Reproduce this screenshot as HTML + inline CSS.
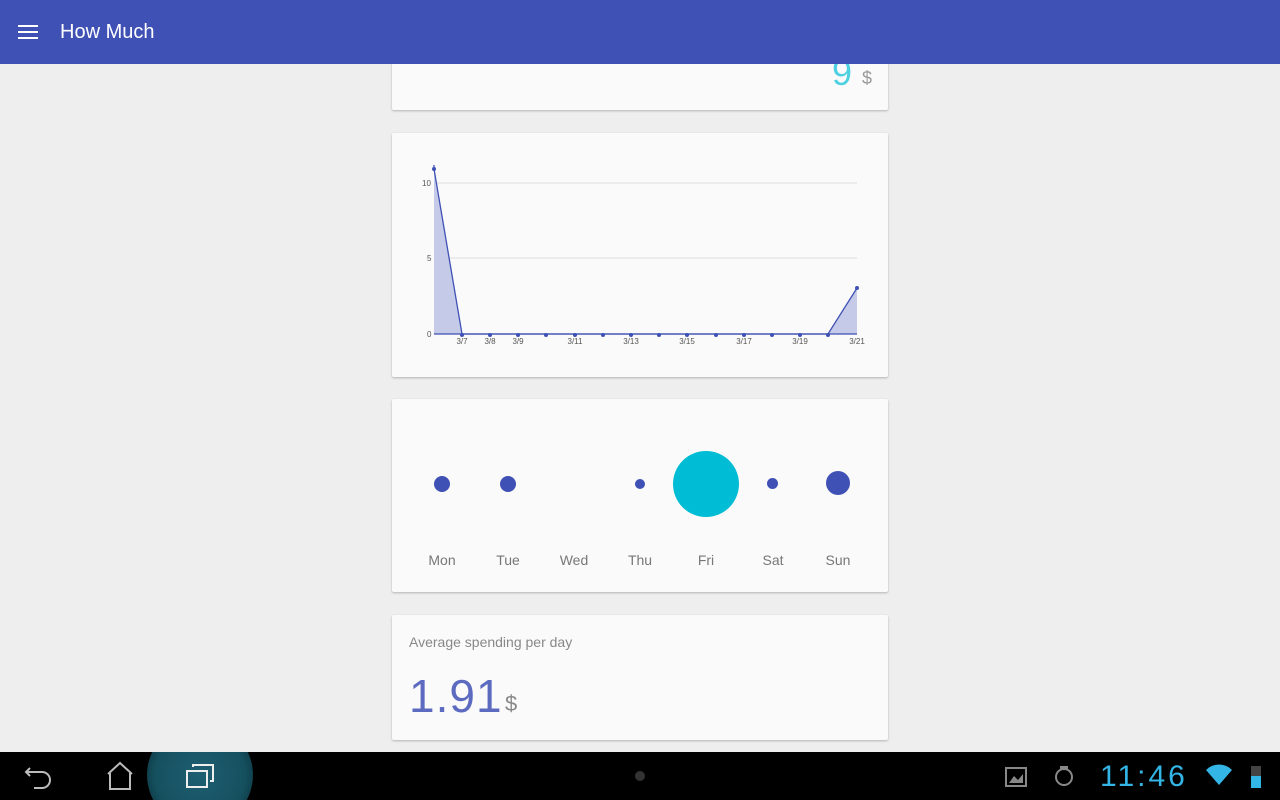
<!DOCTYPE html>
<html><head><style>
body{margin:0;width:1280px;height:800px;overflow:hidden;background:#eeeeee;font-family:"Liberation Sans",sans-serif;position:relative}
.bar{position:absolute;left:0;top:0;width:1280px;height:64px;background:#3f51b5;color:#fff;z-index:5}
.card{position:absolute;left:392px;width:496px;background:#fafafa;box-shadow:0 1px 2px rgba(0,0,0,.25);border-radius:2px}
.nav{position:absolute;left:0;top:752px;width:1280px;height:48px;background:#000;overflow:hidden}
.day{position:absolute;top:552px;font-size:14px;color:#777;width:60px;text-align:center}
.dot{position:absolute;border-radius:50%;background:#3f51b5}
</style></head><body>
<div class="bar">
<div style="position:absolute;left:18px;top:25px;width:20px;height:2px;background:#fff;box-shadow:0 6px 0 #fff,0 12px 0 #fff"></div>
<div style="position:absolute;left:60px;top:21px;font-size:20px;">How Much</div>
</div>
<div class="card" style="top:40px;height:70px">
<div style="position:absolute;right:36px;top:12px;font-size:36px;color:#4dd0e1">9</div>
<div style="position:absolute;right:16px;top:28px;font-size:18px;color:#999">$</div>
</div>
<div class="card" style="top:133px;height:244px"></div>
<svg style="position:absolute;left:0;top:0" width="1280" height="400">
<line x1="434" y1="183" x2="857" y2="183" stroke="#ddd"/>
<line x1="434" y1="258" x2="857" y2="258" stroke="#ddd"/>
<polygon points="434,334 434,169 462,334 828,334 857,288 857,334" fill="#c5cae9"/>
<polyline points="434,165 434,169 462,334 828,334 857,288" fill="none" stroke="#3f51b5" stroke-width="1.3"/>
<line x1="434" y1="334" x2="857" y2="334" stroke="#3f51b5" stroke-width="1.3"/>
<g fill="#3f51b5">
<circle cx="434" cy="169" r="2"/><circle cx="462" cy="335" r="2"/><circle cx="490" cy="335" r="2"/><circle cx="518" cy="335" r="2"/><circle cx="546" cy="335" r="2"/><circle cx="575" cy="335" r="2"/><circle cx="603" cy="335" r="2"/><circle cx="631" cy="335" r="2"/><circle cx="659" cy="335" r="2"/><circle cx="687" cy="335" r="2"/><circle cx="716" cy="335" r="2"/><circle cx="744" cy="335" r="2"/><circle cx="772" cy="335" r="2"/><circle cx="800" cy="335" r="2"/><circle cx="828" cy="335" r="2"/><circle cx="857" cy="288" r="2"/>
</g>
<g font-size="8" fill="#555" font-family="Liberation Sans">
<text x="422" y="186">10</text><text x="427" y="261">5</text><text x="427" y="337">0</text>
<g text-anchor="middle"><text x="462" y="344">3/7</text><text x="490" y="344">3/8</text><text x="518" y="344">3/9</text><text x="575" y="344">3/11</text><text x="631" y="344">3/13</text><text x="687" y="344">3/15</text><text x="744" y="344">3/17</text><text x="800" y="344">3/19</text><text x="857" y="344">3/21</text></g>
</g>
</svg>
<div class="card" style="top:399px;height:193px"></div>
<div class="dot" style="left:434px;top:476px;width:16px;height:16px"></div>
<div class="dot" style="left:500px;top:476px;width:16px;height:16px"></div>
<div class="dot" style="left:635px;top:479px;width:10px;height:10px"></div>
<div class="dot" style="left:673px;top:451px;width:66px;height:66px;background:#00bcd4"></div>
<div class="dot" style="left:767px;top:478px;width:11px;height:11px"></div>
<div class="dot" style="left:826px;top:471px;width:24px;height:24px"></div>
<div class="day" style="left:412px">Mon</div><div class="day" style="left:478px">Tue</div><div class="day" style="left:544px">Wed</div><div class="day" style="left:610px">Thu</div><div class="day" style="left:676px">Fri</div><div class="day" style="left:743px">Sat</div><div class="day" style="left:808px">Sun</div>
<div class="card" style="top:615px;height:125px">
<div style="position:absolute;left:17px;top:19px;font-size:14px;color:#888">Average spending per day</div>
<div style="position:absolute;left:17px;top:54px;font-size:46px;color:#5c6bc0;letter-spacing:1px">1.91</div>
<div style="position:absolute;left:113px;top:76px;font-size:22px;color:#888">$</div>
</div>
<div class="nav">
<div style="position:absolute;left:147px;top:-30px;width:106px;height:106px;border-radius:50%;background:radial-gradient(circle,#1e5f72 0%,#15505f 60%,#0b2e38 85%,#000 100%)"></div>
<svg width="1280" height="48" style="position:absolute;left:0;top:0">
<path d="M30 16 L26 20 L30 24 M26 20 H42 A8 8 0 0 1 42 36 H34" fill="none" stroke="#bbb" stroke-width="2"/>
<path d="M108 22 L120 11 L132 22 M110 21 V37 H130 V21" fill="none" stroke="#bbb" stroke-width="2"/>
<rect x="187" y="19" width="20" height="16" fill="none" stroke="#eee" stroke-width="2"/>
<path d="M193 15 V13 H213 V29 H210" fill="none" stroke="#eee" stroke-width="2"/>
<circle cx="640" cy="24" r="5" fill="#333"/>
<rect x="1006" y="16" width="20" height="18" fill="none" stroke="#888" stroke-width="2"/>
<path d="M1009 31 L1014 24 L1018 28 L1023 22 V31 Z" fill="#888"/>
<circle cx="1064" cy="25" r="8" fill="none" stroke="#888" stroke-width="2"/><rect x="1060" y="14" width="8" height="3" fill="#888"/>
<text x="1100" y="34" font-size="30" fill="#33b5e5" font-family="Liberation Sans" letter-spacing="3">11:46</text>
<path d="M1206 18 A18 18 0 0 1 1232 18 L1219 33 Z" fill="#33b5e5"/>
<rect x="1251" y="14" width="10" height="22" fill="#444"/><rect x="1251" y="24" width="10" height="12" fill="#33b5e5"/>
</svg>
</div>
</body></html>
